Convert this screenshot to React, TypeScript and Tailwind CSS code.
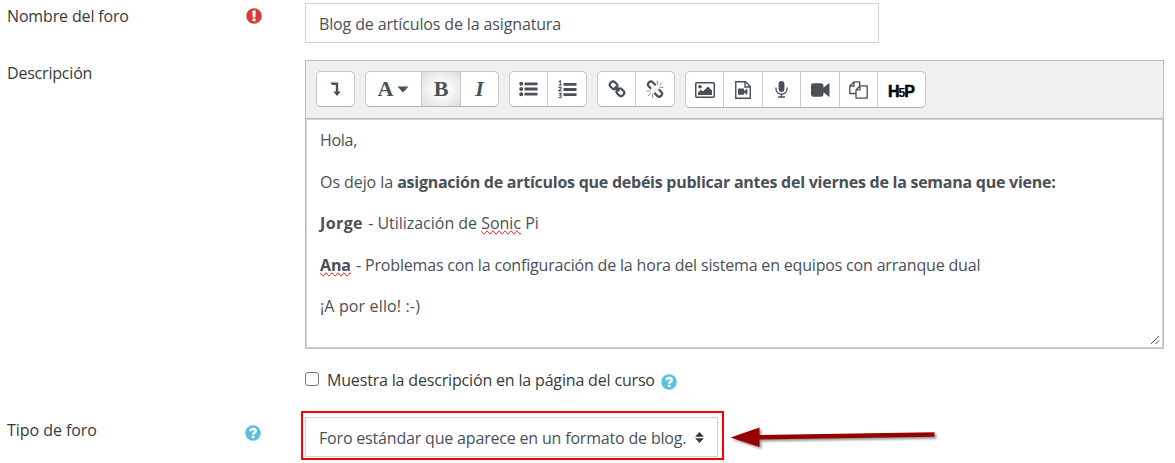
import type { ReactNode } from "react";

const INK = "#495057";

function HelpIcon({ kind = "help" }: { kind?: "help" | "required" }) {
  return (
    <svg width="16" height="16" viewBox="0 0 16 16" className="block shrink-0">
      <circle cx="8" cy="8" r="7.8" fill={kind === "help" ? "#5bc0de" : "#d43f3a"} />
      {kind === "help" ? (
        <g>
          <path d="M5.3 6.3C5.600 4.500 6.700 3.900 8.100 3.900c1.600 0 2.600.9 2.600 2.200C10.700 7.900 8.200 7.700 8.200 9.700" fill="none" stroke="#fff" strokeWidth="2.500" />
          <rect x="6.900" y="10.700" width="2.600" height="2.300" fill="#fff" />
        </g>
      ) : (
        <g fill="#fff">
          <path d="M6.400 2.500h3.300l-.4 6.900H6.800z" />
          <rect x="6.600" y="10.500" width="2.900" height="2.700" />
        </g>
      )}
    </svg>
  );
}

function Group({ children, tall = false }: { children: ReactNode; tall?: boolean }) {
  return (
    <div
      className={
        "flex overflow-hidden rounded-[5px] border border-[#c8c8c8] border-b-[#b3b3b3] bg-white " +
        (tall ? "h-[37px]" : "h-[36px]")
      }
    >
      {children}
    </div>
  );
}

function Tool({ width, label, active = false, last = false, children }: {
  width: string;
  label: string;
  active?: boolean;
  last?: boolean;
  children: ReactNode;
}) {
  return (
    <button
      aria-label={label}
      className={
        "flex h-full items-center justify-center text-[#495057] " +
        width +
        (last ? "" : " border-r border-[#cccccc]") +
        (active ? " bg-[radial-gradient(ellipse_at_center,#ffffff_0%,#f8f8f8_35%,#dedede_100%)]" : "")
      }
    >
      {children}
    </button>
  );
}

function Toolbar() {
  return (
    <div className="flex h-[58px] items-start gap-[10px] border-b border-[#b9bbbe] bg-[#f0f0f0] pt-[10px] pl-[10px]">
      <Group>
        <Tool width="w-[37px]" label="Mostrar más botones" last>
          <svg width="12" height="16" viewBox="0 0 12 16" fill={INK}>
            <path d="M.3 1.500h7.900v9h2.600L7 15 3.200 10.500h2.600V4H2.200z" />
          </svg>
        </Tool>
      </Group>
      <Group>
        <Tool width="w-[56px]" label="Estilos de párrafo">
          <span className="font-['Liberation_Serif',serif] text-[22px] leading-none font-bold">A</span>
          <svg width="12" height="7" viewBox="0 0 12 7" fill={INK} className="ml-1">
            <path d="M.5.500h11L6 6.500z" />
          </svg>
        </Tool>
        <Tool width="w-[39px]" label="Negrita" active>
          <span className="font-['Liberation_Serif',serif] text-[22px] leading-none font-bold">B</span>
        </Tool>
        <Tool width="w-[37px]" label="Cursiva" last>
          <span className="font-['Liberation_Serif',serif] text-[22px] leading-none font-bold italic">I</span>
        </Tool>
      </Group>
      <Group>
        <Tool width="w-[38px]" label="Lista">
          <svg width="19" height="16" viewBox="0 0 19 16" fill={INK}>
            <circle cx="2.200" cy="2.800" r="2" />
            <circle cx="2.200" cy="8" r="2" />
            <circle cx="2.200" cy="13.200" r="2" />
            <path d="M5.500 1.500h13v2.800h-13zM5.500 6.600h13v2.800h-13zM5.500 11.800h13v2.800h-13z" />
          </svg>
        </Tool>
        <Tool width="w-[38px]" label="Lista numerada" last>
          <svg width="19" height="19" viewBox="0 0 19 19" fill={INK}>
            <path d="M5.500 3h13v2.800h-13zM5.500 8.100h13v2.800h-13zM5.500 13.300h13v2.800h-13z" />
            <path d="M.8 1.700 2.300.8v4M.6 5h3.300M.7 8c.5-1.200 2.700-1.100 2.500.2C3 9.200.9 9.900.9 11h2.900M.8 13.500h2.500L2 15.200c1.700-.1 1.800 2.400 0 2.400-.7 0-1.100-.2-1.400-.5" fill="none" stroke={INK} strokeWidth="1.100" />
          </svg>
        </Tool>
      </Group>
      <Group>
        <Tool width="w-[38px]" label="Enlace">
          <svg width="18" height="18" viewBox="0 0 18 18" fill="none" stroke={INK} strokeWidth="2.200">
            <rect x="1.700" y="2.200" width="7.800" height="6.200" rx="2.800" transform="rotate(45 5.600 5.300)" />
            <rect x="8.500" y="9.200" width="7.800" height="6.200" rx="2.800" transform="rotate(45 12.400 12.300)" />
            <path d="M6.600 6.600l4.600 4.600" />
          </svg>
        </Tool>
        <Tool width="w-[38px]" label="Quitar enlace" last>
          <svg width="18" height="18" viewBox="0 0 18 18" fill="none" stroke={INK} strokeWidth="2.200">
            <path d="M5.200 8.800 2.600 6.200a2.600 2.600 0 0 1 0-3.400l.5-.5a2.600 2.600 0 0 1 3.600 0l3 3" />
            <path d="M12.700 9.200l2.700 2.700a2.600 2.600 0 0 1 0 3.500l-.5.500a2.600 2.600 0 0 1-3.600 0l-3-3" />
            <path d="M11.300 4.700V.7M13 5.500l3.200-3.200M13.500 7.300h4M.5 11h4M1.800 16.200 5 13M6.600 13.700v4" strokeWidth=".9" stroke="#7b8187" />
          </svg>
        </Tool>
      </Group>
      <Group tall>
        <Tool width="w-[38px]" label="Imagen">
          <svg width="20" height="16" viewBox="0 0 20 16">
            <rect x=".75" y=".75" width="18.500" height="14.500" rx="1" fill="none" stroke={INK} strokeWidth="1.500" />
            <circle cx="5" cy="4.800" r="1.800" fill={INK} />
            <path d="M3 13v-2.500L6 7.700l1.800 1.800L13 4.500l4 4V13z" fill={INK} />
          </svg>
        </Tool>
        <Tool width="w-[39px]" label="Multimedia">
          <svg width="16" height="18" viewBox="0 0 16 18">
            <path d="M.75.750h9.700l4.800 4.800v11.700H.75zM10 1v5h5" fill="none" stroke={INK} strokeWidth="1.400" />
            <path d="M3 8.500q0-.9.900-.9h4.300q.9 0 .9.900v1.400l3.200-2.500v6.500l-3.200-2.500v1.400q0 .9-.9.900H3.900q-.9 0-.9-.9z" fill={INK} />
          </svg>
        </Tool>
        <Tool width="w-[38px]" label="Grabar audio">
          <svg width="13" height="17" viewBox="0 0 13 17">
            <rect x="3.600" y="0" width="5.800" height="11" rx="2.900" fill={INK} />
            <path d="M1 6.500v1.700a5.500 5 0 0 0 11 0V6.500M6.500 13.200v3M3 16h7" fill="none" stroke={INK} strokeWidth="1.300" />
          </svg>
        </Tool>
        <Tool width="w-[39px]" label="Grabar video">
          <svg width="19" height="14" viewBox="0 0 19 14" fill={INK}>
            <path d="M0 3Q0 .3 2.700.300H9.800Q12.500.300 12.500 3v1.800L17.500.500q1-.6 1 .6v11.800q0 1.200-1 .6l-5-4.300V11q0 2.700-2.700 2.700H2.700Q0 13.700 0 11z" />
          </svg>
        </Tool>
        <Tool width="w-[38px]" label="Gestionar archivos">
          <svg width="19" height="18" viewBox="0 0 19 18" fill="none" stroke={INK} strokeWidth="1.300">
            <path d="M7 12.500H.8V5L5 .8h5.700v4M5 .8V5H.8" />
            <path d="M11 4.800h7.200v12.400H7V8.800zM11 4.800v4H7" />
          </svg>
        </Tool>
        <Tool width="w-[47px]" label="H5P" last>
          <span className="mt-[5px] flex items-baseline font-['Liberation_Sans',sans-serif] text-[16px] leading-none font-bold text-black [-webkit-text-stroke:0.500px_#000]">
            <span>H</span>
            <span className="-ml-[1px] text-[12px] [-webkit-text-stroke:0px]">5</span>
            <span className="-ml-[1px]">P</span>
          </span>
        </Tool>
      </Group>
    </div>
  );
}

export default function App() {
  return (
    <div className="h-[463px] w-[1175px] overflow-hidden bg-white font-['Open_Sans',sans-serif] text-[16px] leading-[24px] font-normal whitespace-nowrap text-[#373a3c]">
      <div className="flex h-[60px] pt-[3px]">
        <div className="flex w-[305px] items-start justify-between pt-[1px] pr-[43px] pl-[7px]">
          <label className="tracking-[-0.150px]">Nombre del foro</label>
          <span className="pt-1"><HelpIcon kind="required" /></span>
        </div>
        <div className="flex h-[40px] w-[574px] items-center border border-[#ced4da] pt-px pl-[13px] tracking-[-0.140px] text-[#495057]">
          Blog de artículos de la asignatura
        </div>
      </div>

      <div className="flex h-[307px]">
        <label className="w-[305px] pt-[1px] pl-[7px] tracking-[-0.200px]">Descripción</label>
        <div className="h-[289px] w-[859px] border border-[#b9bbbe]">
          <Toolbar />
          <div className="relative h-[229px] border border-t border-[#ced4da] pt-[8px] pl-[13px] text-[#495057]">
            <div className="flex flex-col gap-[17.600px]">
              <p className="tracking-[-0.300px]">Hola,</p>
              <p>
                <span className="tracking-[-0.070px]">Os dejo la </span>
                <b className="font-bold tracking-[-0.250px]">
                  asignación de artículos que debéis publicar antes del viernes de la semana que viene:
                </b>
              </p>
              <p>
                <b className="mr-px font-bold tracking-[0.400px]">Jorge</b>{" "}
                <span className="tracking-[-0.020px]">
                  - Utilización de <span className="[text-decoration-line:spelling-error]">Sonic</span> Pi
                </span>
              </p>
              <p>
                <b className="mr-px font-bold tracking-[-0.100px] [text-decoration-line:spelling-error]">Ana</b>{" "}
                <span className="tracking-[-0.180px]">
                  - Problemas con la configuración de la hora del sistema en equipos con arranque dual
                </span>
              </p>
              <p className="tracking-[0.140px]">¡A por ello! :-)</p>
            </div>
            <svg width="10" height="10" viewBox="0 0 10 10" className="absolute right-[2px] bottom-[2px]" stroke="#555" strokeWidth="1" fill="none">
              <path d="M1 9 9 1M5.500 9 9 5.500" />
            </svg>
          </div>
        </div>
      </div>

      <div className="flex h-[44px] items-start pl-[305px]">
        <span className="mt-[5px] h-[14px] w-[14px] rounded-[3px] border border-[#767676] bg-white" />
        <span className="ml-[8px] w-[328px] pt-[1px] tracking-[-0.170px]">Muestra la descripción en la página del curso</span>
        <span className="ml-[6px] pt-[7px]"><HelpIcon /></span>
      </div>

      <div className="flex h-[52px]">
        <div className="flex w-[301px] items-start justify-between pt-[7px] pr-[40px] pl-[7px]">
          <label className="tracking-[-0.050px]">Tipo de foro</label>
          <span className="pt-[7px]"><HelpIcon /></span>
        </div>
        <div className="h-[49px] w-[423px] border-2 border-[#f80000] pt-[4px] pl-[2px]">
          <div className="flex h-[40px] w-[413px] items-center border border-[#ced4da] pt-px pl-[13px] text-[#495057]">
            <span className="w-[367px] tracking-[-0.180px]">Foro estándar que aparece en un formato de blog.</span>
            <svg width="9" height="11" viewBox="0 0 8 10" fill="#343a40" className="ml-[9px]">
              <path d="M4 0 8 4.300H0zM4 10 0 5.700h8z" />
            </svg>
          </div>
        </div>
        <svg width="216" height="36" viewBox="724 411 216 36" className="overflow-visible drop-shadow-[2px_2px_1px_rgba(0,0,0,0.4)]">
          <path d="M730.500 437.500 759.500 427.500V435L934.500 432.300V436.800L759.500 439.500V447z" fill="#960000" />
        </svg>
      </div>
    </div>
  );
}
